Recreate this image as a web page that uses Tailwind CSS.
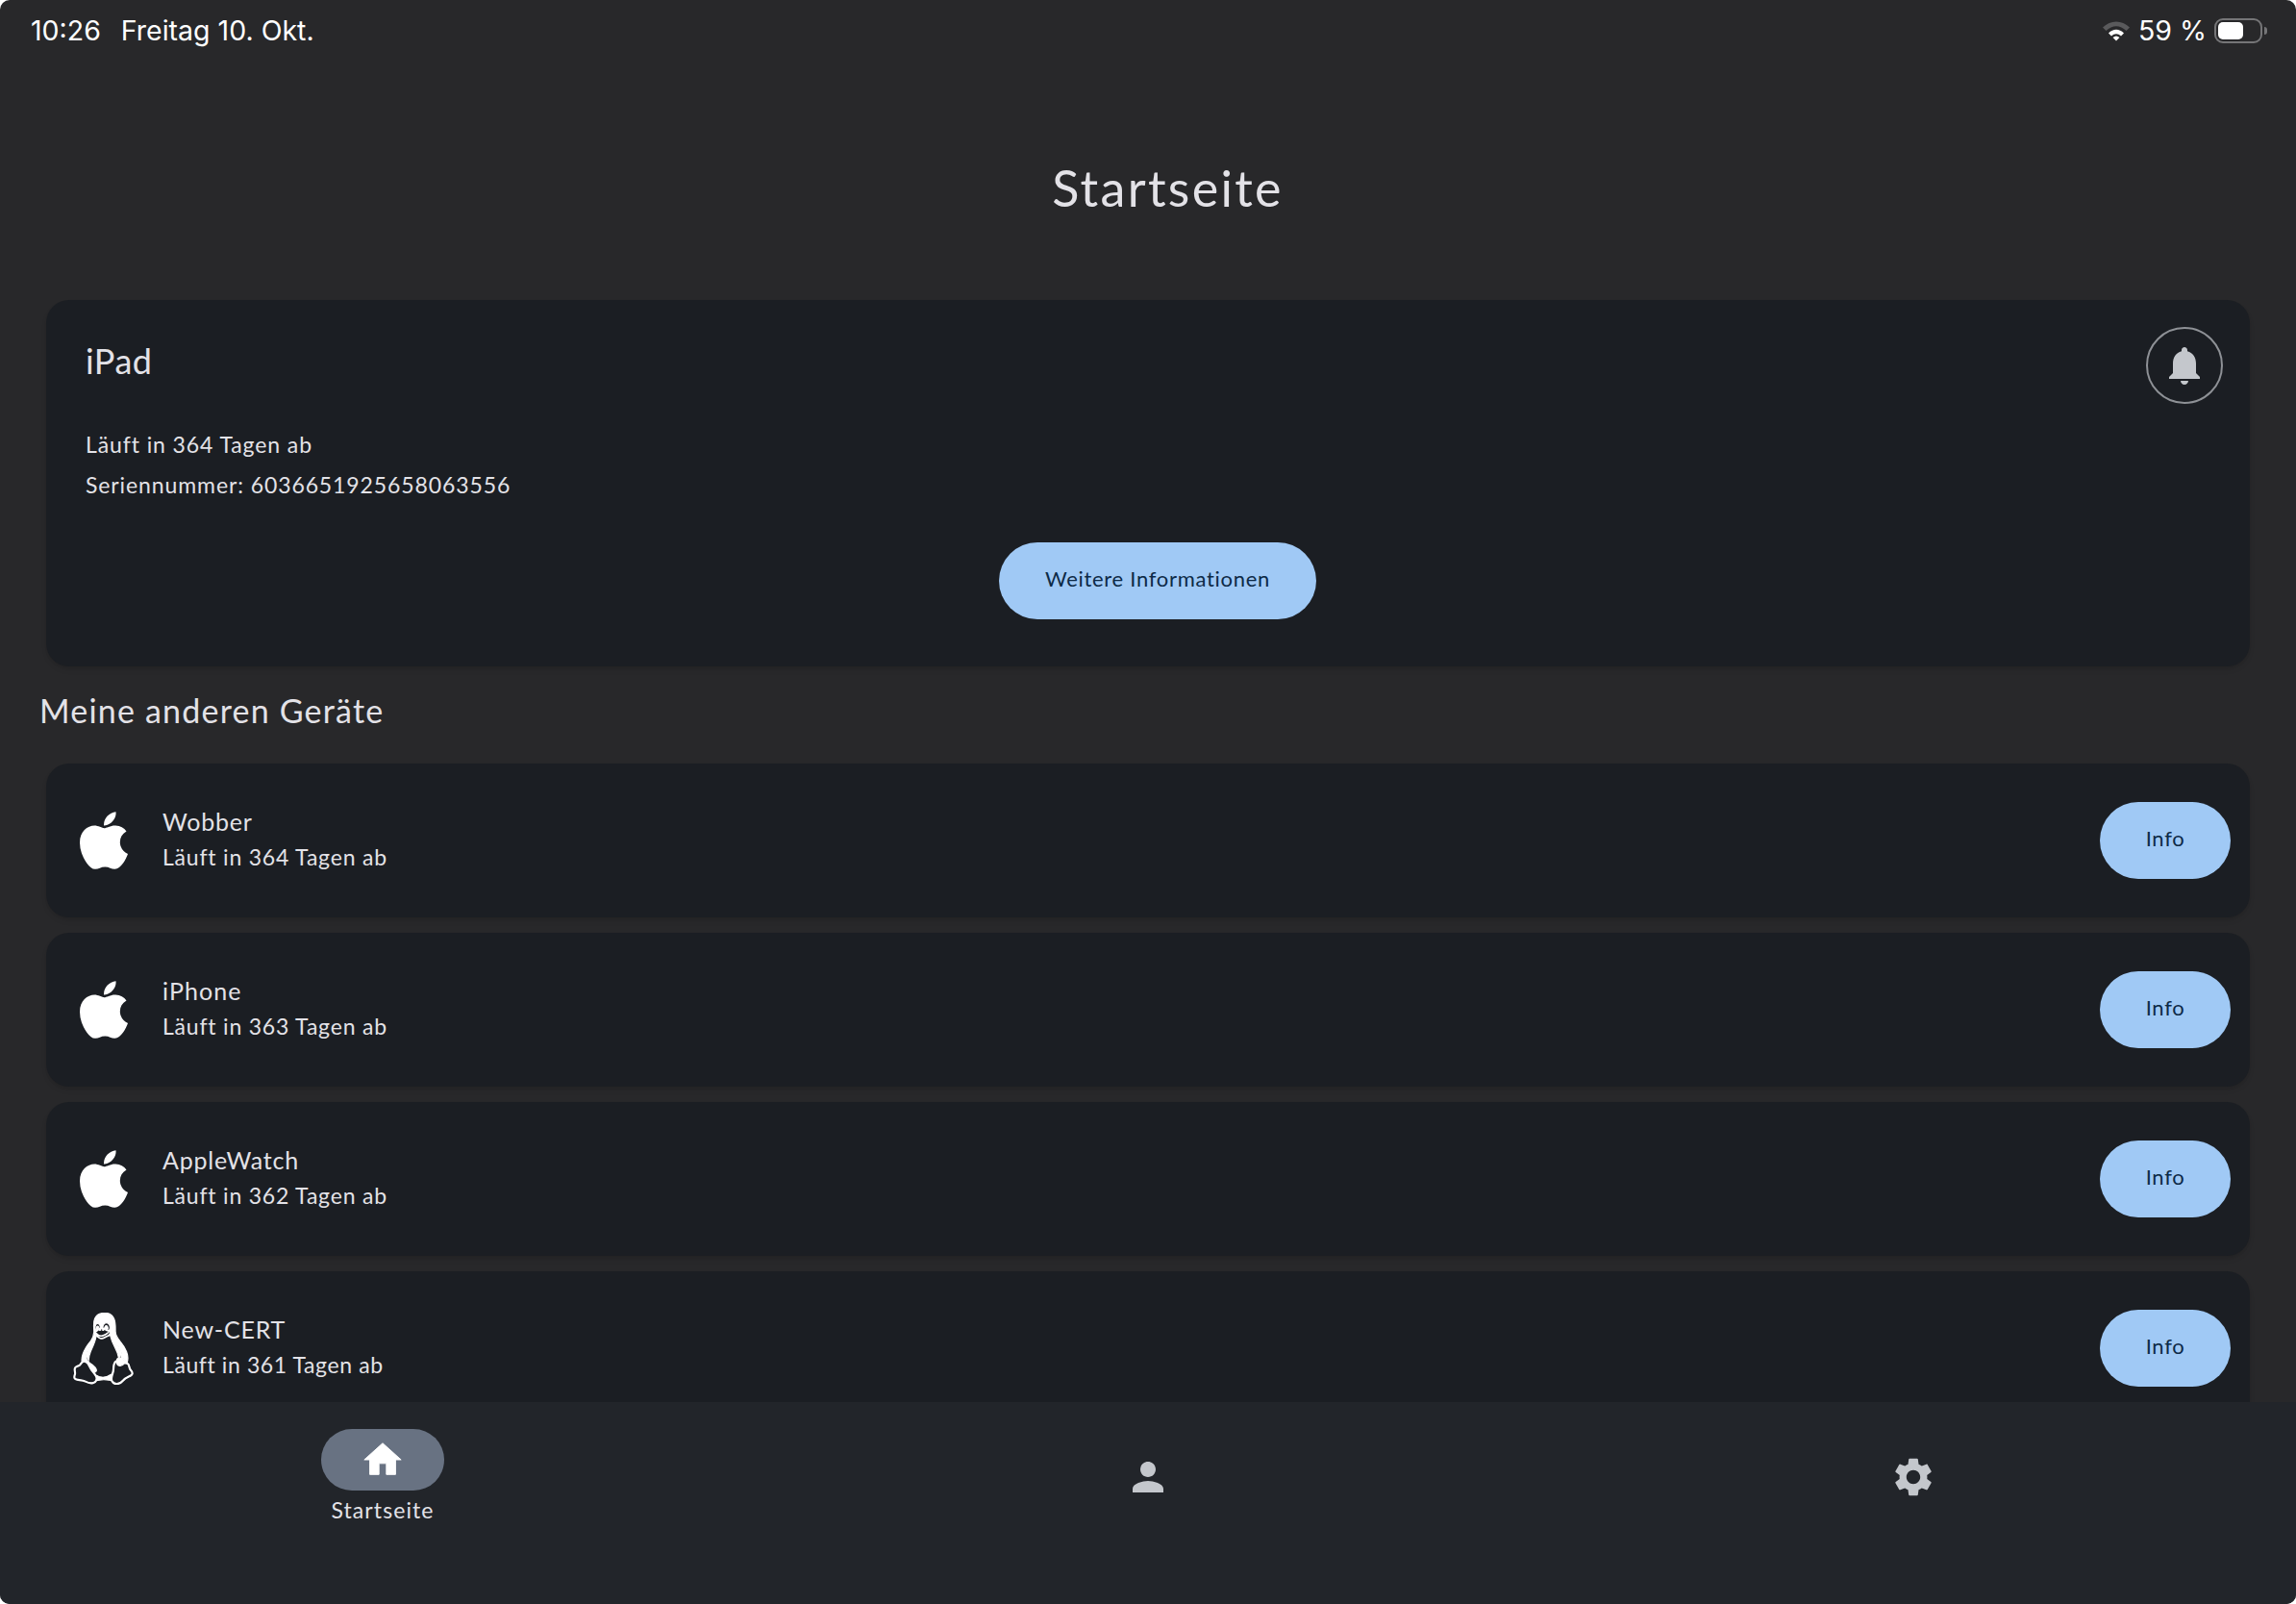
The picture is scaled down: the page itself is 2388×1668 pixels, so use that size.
<!DOCTYPE html>
<html lang="de">
<head>
    <meta charset="UTF-8">
    <title>Startseite</title>
    <script src="https://cdn.jsdelivr.net/npm/@tailwindcss/browser@4"></script>
</head>
<body class="bg-[#ffffff]">
    <div class="w-[2388px] h-[1668px] flex flex-col overflow-hidden rounded-[10px] bg-[#28282a] font-['Lato',sans-serif] text-[#e3e2e7]">
        <!-- status bar -->
        <div class="h-[64px] shrink-0 flex items-center justify-between pl-[32px] pr-[30px] font-['Inter',sans-serif] text-[28.5px] text-white">
            <div class="flex gap-[21px]">
                <span>10:26</span>
                <span>Freitag 10. Okt.</span>
            </div>
            <div class="flex items-center">
                <svg class="w-[30px] h-[22px]" viewBox="0 0 30 22">
                    <path d="M1 7.5 C9 -0.5 21 -0.5 29 7.5 L25.5 11 C19 4.5 11 4.5 4.5 11 Z" fill="#5a5a5c"/>
                    <path d="M7 13.5 C12 8.5 18 8.5 23 13.5 L20 16.5 C16.5 13.5 13.5 13.5 10 16.5 Z" fill="#fff"/>
                    <path d="M11.5 18 C14 16 16 16 18.5 18 L15 21.5 Z" fill="#fff"/>
                </svg>
                <span class="ml-[8px]">59 %</span>
                <div class="ml-[8px] w-[50px] h-[26px] rounded-[9px] border-2 border-[#757577] p-[2px]">
                    <div class="w-[26px] h-full rounded-[5px] bg-white"></div>
                </div>
                <div class="ml-[2px] w-[3px] h-[8px] rounded-r-full bg-[#757577]"></div>
            </div>
        </div>

        <!-- content -->
        <main class="flex-1 min-h-0 overflow-hidden">
            <h1 class="h-[248px] pt-[99px] text-center text-[52px] leading-[64px] tracking-[2.3px] pl-[41px]">Startseite</h1>

            <section class="relative mx-[48px] h-[381px] rounded-[24px] bg-[#1b1e23] pt-[42px] pl-[41px] shadow-md">
                <h2 class="text-[36px] leading-[42px] tracking-[0.5px]">iPad</h2>
                <p class="mt-[45px] text-[23px] leading-[42px] tracking-[0.9px]">Läuft in 364 Tagen ab</p>
                <p class="text-[23px] leading-[42px] tracking-[0.9px]">Seriennummer: 6036651925658063556</p>
                <button class="absolute left-[991px] top-[252px] w-[330px] h-[80px] pb-[6px] rounded-full bg-[#a0c9f5] text-[#0d2a47] text-[22px] tracking-[0.7px]">Weitere Informationen</button>
                <div class="absolute right-[28px] top-[28px] w-[80px] h-[80px] rounded-full border-2 border-[#8e9196] flex items-center justify-center">
                    <svg class="w-[48px] h-[48px]" viewBox="0 0 24 24" fill="#c4c7cc"><path d="M12 22c1.1 0 2-.9 2-2h-4c0 1.1.89 2 2 2zm6-6v-5c0-3.07-1.64-5.64-4.5-6.32V4c0-.83-.67-1.5-1.5-1.5s-1.5.67-1.5 1.5v.68C7.63 5.36 6 7.92 6 11v5l-2 2v1h16v-1l-2-2z"/></svg>
                </div>
            </section>

            <h2 class="h-[101px] pl-[41px] pt-[25px] text-[34px] leading-[42px] tracking-[1.2px]">Meine anderen Geräte</h2>

            <div class="mx-[48px] flex flex-col gap-[16px]">
                <div class="h-[160px] shrink-0 rounded-[24px] bg-[#1b1e23] flex items-center pr-[20px] shadow-md">
                    <div class="w-[121px] flex justify-center pr-[2px]">
                        <svg class="w-[50px] h-[60px]" viewBox="4 32 376 448" fill="#fff"><path d="M318.7 268.7c-.2-36.7 16.4-64.4 50-84.8-18.8-26.9-47.2-41.7-84.7-44.6-35.5-2.8-74.3 20.7-88.5 20.7-15 0-49.4-19.7-76.4-19.7C63.3 141.2 4 184.8 4 273.5q0 39.3 14.4 81.2c12.8 36.7 59 126.7 107.2 125.2 25.2-.6 43-17.9 75.8-17.9 31.8 0 48.3 17.9 76.4 17.9 48.6-.7 90.4-82.5 102.6-119.3-65.2-30.7-61.7-90-61.7-91.9zm-56.6-164.2c27.3-32.4 24.8-61.9 24-72.5-24.1 1.4-52 16.4-67.9 34.9-17.5 19.8-27.8 44.3-25.6 71.9 26.1 2 49.9-11.4 69.5-34.3z"/></svg>
                    </div>
                    <div class="flex-1 pb-[4px]">
                        <div class="text-[25px] leading-[37px] tracking-[0.8px]">Wobber</div>
                        <div class="text-[23px] leading-[36px] tracking-[0.8px]">Läuft in 364 Tagen ab</div>
                    </div>
                    <button class="w-[136px] h-[80px] pb-[6px] rounded-full bg-[#a0c9f5] text-[#0d2a47] text-[22px] tracking-[0.7px]">Info</button>
                </div>
                <div class="h-[160px] shrink-0 rounded-[24px] bg-[#1b1e23] flex items-center pr-[20px] shadow-md">
                    <div class="w-[121px] flex justify-center pr-[2px]">
                        <svg class="w-[50px] h-[60px]" viewBox="4 32 376 448" fill="#fff"><path d="M318.7 268.7c-.2-36.7 16.4-64.4 50-84.8-18.8-26.9-47.2-41.7-84.7-44.6-35.5-2.8-74.3 20.7-88.5 20.7-15 0-49.4-19.7-76.4-19.7C63.3 141.2 4 184.8 4 273.5q0 39.3 14.4 81.2c12.8 36.7 59 126.7 107.2 125.2 25.2-.6 43-17.9 75.8-17.9 31.8 0 48.3 17.9 76.4 17.9 48.6-.7 90.4-82.5 102.6-119.3-65.2-30.7-61.7-90-61.7-91.9zm-56.6-164.2c27.3-32.4 24.8-61.9 24-72.5-24.1 1.4-52 16.4-67.9 34.9-17.5 19.8-27.8 44.3-25.6 71.9 26.1 2 49.9-11.4 69.5-34.3z"/></svg>
                    </div>
                    <div class="flex-1 pb-[4px]">
                        <div class="text-[25px] leading-[37px] tracking-[1.1px]">iPhone</div>
                        <div class="text-[23px] leading-[36px] tracking-[0.8px]">Läuft in 363 Tagen ab</div>
                    </div>
                    <button class="w-[136px] h-[80px] pb-[6px] rounded-full bg-[#a0c9f5] text-[#0d2a47] text-[22px] tracking-[0.7px]">Info</button>
                </div>
                <div class="h-[160px] shrink-0 rounded-[24px] bg-[#1b1e23] flex items-center pr-[20px] shadow-md">
                    <div class="w-[121px] flex justify-center pr-[2px]">
                        <svg class="w-[50px] h-[60px]" viewBox="4 32 376 448" fill="#fff"><path d="M318.7 268.7c-.2-36.7 16.4-64.4 50-84.8-18.8-26.9-47.2-41.7-84.7-44.6-35.5-2.8-74.3 20.7-88.5 20.7-15 0-49.4-19.7-76.4-19.7C63.3 141.2 4 184.8 4 273.5q0 39.3 14.4 81.2c12.8 36.7 59 126.7 107.2 125.2 25.2-.6 43-17.9 75.8-17.9 31.8 0 48.3 17.9 76.4 17.9 48.6-.7 90.4-82.5 102.6-119.3-65.2-30.7-61.7-90-61.7-91.9zm-56.6-164.2c27.3-32.4 24.8-61.9 24-72.5-24.1 1.4-52 16.4-67.9 34.9-17.5 19.8-27.8 44.3-25.6 71.9 26.1 2 49.9-11.4 69.5-34.3z"/></svg>
                    </div>
                    <div class="flex-1 pb-[4px]">
                        <div class="text-[25px] leading-[37px] tracking-[0.8px]">AppleWatch</div>
                        <div class="text-[23px] leading-[36px] tracking-[0.8px]">Läuft in 362 Tagen ab</div>
                    </div>
                    <button class="w-[136px] h-[80px] pb-[6px] rounded-full bg-[#a0c9f5] text-[#0d2a47] text-[22px] tracking-[0.7px]">Info</button>
                </div>
                <div class="h-[160px] shrink-0 rounded-[24px] bg-[#1b1e23] flex items-center pr-[20px] shadow-md">
                    <div class="w-[121px] flex justify-center pr-[2px]">
                        <svg class="w-[65px] h-[75px]" viewBox="0 0 448 512" fill="#fff" stroke="#fff" stroke-width="8"><path d="M220.8 123.3c1 .5 1.8 1.7 3 1.7 1.1 0 2.8-.4 2.9-1.5.2-1.4-1.9-2.3-3.2-2.9-1.7-.7-3.9-1-5.5-.1-.4.2-.8.7-.6 1.1.3 1.3 2.3 1.1 3.4 1.7zm-21.9 1.7c1.2 0 2-1.2 3-1.7 1.1-.6 3.1-.4 3.5-1.6.2-.4-.2-.9-.6-1.1-1.6-.9-3.8-.6-5.5.1-1.3.6-3.4 1.5-3.2 2.9.1 1 1.8 1.5 2.8 1.4zM420 403.8c-3.6-4-5.3-11.6-7.2-19.7-1.8-8.1-3.9-16.8-10.5-22.4-1.3-1.1-2.6-2.1-4-2.9-1.3-.8-2.7-1.5-4.1-2 9.2-27.3 5.6-54.5-3.7-79.1-11.4-30.1-31.3-56.4-46.5-74.4-17.1-21.5-33.7-41.9-33.4-72C311.1 85.4 315.7.1 234.8 0 132.4-.2 158 103.4 156.9 135.2c-1.7 23.4-6.4 41.8-22.5 64.7-18.9 22.5-45.5 58.8-58.1 96.7-6 17.9-8.8 36.1-6.2 53.3-6.5 5.8-11.4 14.7-16.6 20.2-4.2 4.3-10.3 5.9-17 8.3s-14 6-18.5 14.5c-2.1 3.9-2.8 8.1-2.8 12.4 0 3.9.6 7.9 1.2 11.8 1.2 8.1 2.5 15.7.8 20.8-5.2 14.4-5.9 24.4-2.2 31.7 3.8 7.3 11.4 10.5 20.1 12.3 17.3 3.6 40.8 2.7 59.3 12.5 19.8 10.4 39.9 14.1 55.9 10.4 11.6-2.6 21.1-9.6 25.9-20.2 12.5-.1 26.3-5.4 48.3-6.6 14.9-1.2 33.6 5.3 55.1 4.1.6 2.3 1.4 4.6 2.5 6.7v.1c8.3 16.7 23.8 24.3 40.3 23 16.6-1.3 34.1-11 48.3-27.9 13.6-16.4 36-23.2 50.9-32.2 7.4-4.5 13.4-10.1 13.9-18.3.4-8.2-4.4-17.3-15.5-29.7zM223.7 87.3c9.8-22.2 34.2-21.8 44-.4 6.5 14.2 3.6 30.9-4.3 40.4-1.6-.8-5.9-2.6-12.6-4.9 1.1-1.2 3.1-2.7 3.9-4.6 4.8-11.8-.2-27-9.1-27.3-7.3-.5-13.9 10.8-11.8 23-4.1-2-9.4-3.5-13-4.4-1-6.9-.3-14.6 2.9-21.8zM183 75.8c10.1 0 20.8 14.2 19.1 33.5-3.5 1-7.1 2.5-10.2 4.6 1.2-8.9-3.3-20.1-9.6-19.6-8.4.7-9.8 21.2-1.8 28.1 1 .8 1.9-.2-5.9 5.5-15.6-14.6-10.5-52.1 8.4-52.1zm-13.6 60.7c6.2-4.6 13.6-10 14.1-10.5 4.7-4.4 13.5-14.2 27.9-14.2 7.1 0 15.6 2.3 25.9 8.9 6.3 4.1 11.3 4.4 22.6 9.3 8.4 3.5 13.7 9.7 10.5 18.2-2.6 7.1-11 14.4-22.7 18.1-11.1 3.6-19.8 16-38.2 14.9-3.9-.2-7-1-9.6-2.1-8-3.5-12.2-10.4-20-15-8.6-4.8-13.2-10.4-14.7-15.3-1.4-4.9 0-9 4.2-12.3zm3.3 334c-2.7 35.1-43.9 34.4-75.3 18-29.9-15.8-68.6-6.5-76.5-21.9-2.4-4.7-2.4-12.7 2.6-26.4v-.2c2.4-7.6.6-16-.6-23.9-1.2-7.8-1.8-15 .9-20 3.5-6.7 8.5-9.1 14.8-11.3 10.3-3.7 11.8-3.4 19.6-9.9 5.5-5.7 9.5-12.9 14.3-18 5.1-5.5 10-8.1 17.7-6.9 8.1 1.2 15.1 6.8 21.9 16l19.6 35.6c9.5 19.9 43.1 48.4 41 68.9zm-1.4-25.9c-4.1-6.6-9.6-13.6-14.4-19.6 7.1 0 14.2-2.2 16.7-8.9 2.3-6.2 0-14.9-7.4-24.9-13.5-18.2-38.3-32.5-38.3-32.5-13.5-8.4-21.1-18.7-24.6-29.9s-3-23.3-.3-35.2c5.2-22.9 18.6-45.2 27.2-59.2 2.3-1.7.8 3.2-8.7 20.8-8.5 16.1-24.4 53.3-2.6 82.4.6-20.7 5.5-41.8 13.8-61.5 12-27.4 37.3-74.9 39.3-112.7 1.1.8 4.6 3.2 6.2 4.1 4.6 2.7 8.1 6.7 12.6 10.3 12.4 10 28.5 9.2 42.4 1.2 6.2-3.5 11.2-7.5 15.9-9 9.9-3.1 17.8-8.6 22.3-15 7.7 30.4 25.7 74.3 37.2 95.7 6.1 11.4 18.3 35.5 23.6 64.6 3.3-.1 7 .4 10.9 1.4 13.8-35.7-11.7-74.2-23.3-84.9-4.7-4.6-4.9-6.6-2.6-6.5 12.6 11.2 29.2 33.7 35.2 59 2.8 11.6 3.3 23.7.4 35.7 16.4 6.8 35.9 17.9 30.7 34.8-2.2-.1-3.2 0-4.2 0 3.2-10.1-3.9-17.6-22.8-26.1-19.6-8.6-36-8.6-38.3 12.5-12.1 4.2-18.3 14.7-21.4 27.3-2.8 11.2-3.6 24.7-4.4 39.9-.5 7.7-3.6 18-6.8 29-32.1 22.9-76.7 32.9-114.3 7.2zm257.4-11.5c-.9 16.8-41.2 19.9-63.2 46.5-13.2 15.7-29.4 24.4-43.6 25.5s-26.5-4.8-33.7-19.3c-4.7-11.1-2.4-23.1 1.1-36.3 3.7-14.2 9.2-28.8 9.9-40.6.8-15.2 1.7-28.5 4.2-38.7 2.6-10.3 6.6-17.2 13.7-21.1.3-.2.7-.3 1-.5.8 13.2 7.3 26.6 18.8 29.5 12.6 3.3 30.7-7.5 38.4-16.3 9-.3 15.7-.9 22.6 5.1 9.9 8.5 7.1 30.3 17.1 41.6 10.6 11.6 14 19.5 13.7 24.6zM173.3 148.7c2 1.9 4.7 4.5 8 7.1 6.6 5.2 15.8 10.6 27.3 10.6 11.6 0 22.5-5.9 31.8-10.8 4.9-2.6 10.9-7 14.8-10.4s5.9-6.3 3.1-6.6-2.6 2.6-6 5.1c-4.4 3.2-9.7 7.4-13.9 9.8-7.4 4.2-19.5 10.2-29.9 10.2s-18.7-4.8-24.9-9.7c-3.1-2.5-5.7-5-7.7-6.9-1.5-1.4-1.9-4.6-4.3-4.9-1.4-.1-1.8 3.7 1.7 6.5z"/></svg>
                    </div>
                    <div class="flex-1 pb-[4px]">
                        <div class="text-[25px] leading-[37px] tracking-[0.8px]">New-CERT</div>
                        <div class="text-[23px] leading-[36px] tracking-[0.6px]">Läuft in 361 Tagen ab</div>
                    </div>
                    <button class="w-[136px] h-[80px] pb-[6px] rounded-full bg-[#a0c9f5] text-[#0d2a47] text-[22px] tracking-[0.7px]">Info</button>
                </div>
            </div>
        </main>

        <!-- bottom nav -->
        <nav class="h-[210px] shrink-0 grid grid-cols-3 bg-[#22252a]">
            <div class="flex flex-col items-center pt-[28px]">
                <div class="w-[128px] h-[64px] rounded-full bg-[#687282] flex items-center justify-center">
                    <svg class="w-[46px] h-[46px]" viewBox="0 0 24 24" fill="#fff" stroke="#fff" stroke-width="0.5" stroke-linejoin="round"><path d="M10 20v-6h4v6h5v-8h3L12 3 2 12h3v8z"/></svg>
                </div>
                <span class="mt-[4px] text-[23px] leading-[32px] tracking-[1.1px]">Startseite</span>
            </div>
            <div class="flex justify-center pt-[54px]">
                <svg class="w-[48px] h-[48px]" viewBox="0 0 24 24" fill="#c4c7cc"><path d="M12 12c2.21 0 4-1.79 4-4s-1.79-4-4-4-4 1.79-4 4 1.79 4 4 4zm0 2c-2.67 0-8 1.34-8 4v2h16v-2c0-2.66-5.33-4-8-4z"/></svg>
            </div>
            <div class="flex justify-center pt-[54px]">
                <svg class="w-[48px] h-[48px]" viewBox="0 0 24 24" fill="#c4c7cc"><path d="M19.14 12.94c.04-.3.06-.61.06-.94 0-.32-.02-.64-.07-.94l2.03-1.58c.18-.14.23-.41.12-.61l-1.92-3.32c-.12-.22-.37-.29-.59-.22l-2.39.96c-.5-.38-1.03-.7-1.62-.94l-.36-2.54c-.04-.24-.24-.41-.48-.41h-3.84c-.24 0-.43.17-.47.41l-.36 2.54c-.59.24-1.13.57-1.62.94l-2.39-.96c-.22-.08-.47 0-.59.22L2.74 8.87c-.12.21-.08.47.12.61l2.03 1.58c-.05.3-.09.63-.09.94s.02.64.07.94l-2.03 1.58c-.18.14-.23.41-.12.61l1.92 3.32c.12.22.37.29.59.22l2.39-.96c.5.38 1.03.7 1.62.94l.36 2.54c.05.24.24.41.48.41h3.84c.24 0 .44-.17.47-.41l.36-2.54c.59-.24 1.13-.56 1.62-.94l2.39.96c.22.08.47 0 .59-.22l1.92-3.32c.12-.22.07-.47-.12-.61l-2.01-1.58zM12 15.6c-1.98 0-3.6-1.62-3.6-3.6s1.62-3.6 3.6-3.6 3.6 1.62 3.6 3.6-1.62 3.6-3.6 3.6z"/></svg>
            </div>
        </nav>
    </div>
</body>
</html>
